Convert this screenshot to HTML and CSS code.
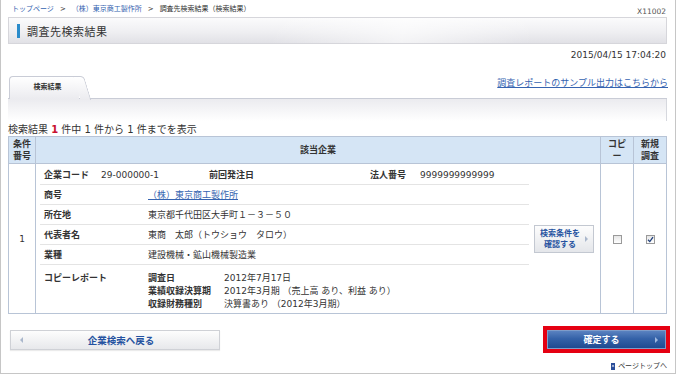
FILE: index.html
```html
<!DOCTYPE html>
<html lang="ja">

<head>
    <meta charset="UTF-8">
    <meta name="viewport" content="width=device-width, initial-scale=1.0">
    <title>調査先検索結果</title>

    <link rel="stylesheet" href="styles.css">
</head>

<body>

    <div class="page">

        <!-- HEADER -->
        <div class="topline">
            <p class="crumbs">
                <a href="#">トップページ</a><span class="crumbs__sep">&gt;</span><a href="#">（株）東京商工製作所</a><span class="crumbs__sep">&gt;</span>調査先検索結果（検索結果）
            </p>
            <span class="screen-id">X11002</span>
        </div>

        <h1 class="title-bar"><span class="title-bar__mark"></span>調査先検索結果</h1>

        <p class="stamp">2015/04/15 17:04:20</p>
        <!-- END HEADER -->

        <!-- TABS -->
        <div class="tabs">
            <div class="tabs__tab">検索結果</div>
            <a class="tabs__link" href="#">調査レポートのサンプル出力はこちらから</a>
        </div>
        <div class="tabs__body"></div>

        <p class="count">検索結果 <b class="count__num">1</b> 件中 1 件から 1 件までを表示</p>

        <!-- RESULT TABLE -->
        <table class="result">
            <colgroup>
                <col class="result__col-no">
                <col class="result__col-company">
                <col class="result__col-check">
                <col class="result__col-check">
            </colgroup>
            <thead>
                <tr>
                    <th>条件<br>番号</th>
                    <th>該当企業</th>
                    <th>コピ<br>ー</th>
                    <th>新規<br>調査</th>
                </tr>
            </thead>
            <tbody>
                <tr>
                    <td class="result__no">1</td>
                    <td class="result__company">
                        <div class="company">
                            <div class="company__info">
                                <div class="info-row">
                                    <span class="info-row__label info-row__label--code">企業コード</span>
                                    <span class="info-row__value info-row__value--code">29-000000-1</span>
                                    <span class="info-row__label info-row__label--order">前回発注日</span>
                                    <span class="info-row__label info-row__label--corp">法人番号</span>
                                    <span class="info-row__value">9999999999999</span>
                                </div>
                                <div class="info-row">
                                    <span class="info-row__label">商号</span>
                                    <a class="info-row__value" href="#">（株）東京商工製作所</a>
                                </div>
                                <div class="info-row">
                                    <span class="info-row__label">所在地</span>
                                    <span class="info-row__value">東京都千代田区大手町１－３－５０</span>
                                </div>
                                <div class="info-row">
                                    <span class="info-row__label">代表者名</span>
                                    <span class="info-row__value">東商　太郎（トウショウ　タロウ）</span>
                                </div>
                                <div class="info-row">
                                    <span class="info-row__label">業種</span>
                                    <span class="info-row__value">建設機械・鉱山機械製造業</span>
                                </div>
                                <div class="info-row info-row--report">
                                    <span class="info-row__label">コピーレポート</span>
                                    <dl class="report">
                                        <dt>調査日</dt>
                                        <dd>2012年7月17日</dd>
                                        <dt>業績収録決算期</dt>
                                        <dd>2012年3月期 （売上高 あり、利益 あり）</dd>
                                        <dt>収録財務種別</dt>
                                        <dd>決算書あり （2012年3月期）</dd>
                                    </dl>
                                </div>
                            </div>
                            <button class="cond-btn">
                                <span class="cond-btn__text">検索条件を<br>確認する</span>
                                <span class="arrow arrow--right"></span>
                            </button>
                        </div>
                    </td>
                    <td class="result__check"><span class="checkbox"></span></td>
                    <td class="result__check">
                        <span class="checkbox">
                            <svg width="7" height="7" viewBox="0 0 7 7">
                                <path d="M1 3.8 L2.8 5.6 L6 1.2" fill="none" stroke="#1f3f7c" stroke-width="1.3"/>
                            </svg>
                        </span>
                    </td>
                </tr>
            </tbody>
        </table>
        <!-- END RESULT TABLE -->

        <div class="actions">
            <button class="back-btn">
                <span class="arrow arrow--left"></span>
                <span class="back-btn__text">企業検索へ戻る</span>
            </button>
            <div class="confirm">
                <button class="confirm__btn">
                    <span class="confirm__text">確定する</span>
                    <span class="arrow arrow--right arrow--light"></span>
                </button>
            </div>
        </div>

        <div class="pagetop">
            <a class="pagetop__link" href="#">
                <svg class="pagetop__icon" width="4" height="7" viewBox="0 0 4 7">
                    <rect width="4" height="7" fill="#2a4d9a"/>
                    <path d="M2 1.8 L3.3 3.6 L0.7 3.6 Z" fill="#fff"/>
                </svg>
                ページトップへ
            </a>
        </div>

    </div>

</body>
</html>
```

FILE: styles.css
```css
* {
    box-sizing: border-box;
}

body {
    margin: 0;
    font-family: "DejaVu Sans", "Noto Sans CJK JP", sans-serif;
    font-size: 9px;
    color: #333;
    background-color: #fff;
}

a {
    color: #3563b0;
}

.page {
    width: 676px;
    height: 374px;
    border: 1px solid #c6c6c6;
    border-top: none;
    padding: 0 8px 0 7px;
}

/* Header */

.topline {
    display: flex;
    justify-content: space-between;
    align-items: flex-start;
    height: 17px;
    padding: 5px 1px 0 4px;
}

.crumbs {
    margin: 0;
    font-size: 7px;
    line-height: 9px;
}

.crumbs a {
    text-decoration: none;
}

.crumbs__sep {
    margin: 0 6px;
}

.screen-id {
    font-size: 7.5px;
    line-height: 9px;
    margin-top: 2px;
    color: #555;
}

.title-bar {
    margin: 0;
    height: 27px;
    display: flex;
    align-items: center;
    padding-left: 8px;
    border: 1px solid #d6d6db;
    background: linear-gradient(100deg, rgba(255, 255, 255, 0) 40%, rgba(255, 255, 255, .6) 60%, rgba(255, 255, 255, 0) 80%),
        linear-gradient(#fbfbfc 0%, #efeff2 55%, #e1e1e6 100%);
    font-size: 11px;
    font-weight: normal;
    letter-spacing: .5px;
    color: #333;
}

.title-bar__mark {
    width: 3px;
    height: 14px;
    margin-right: 7px;
    background-color: #2b8ccb;
}

.stamp {
    margin: 5px 1px 0 0;
    text-align: right;
    font-size: 9px;
    line-height: 12px;
}

/* Tabs */

.tabs {
    display: flex;
    justify-content: space-between;
    align-items: flex-start;
    margin-top: 15px;
    border-bottom: 1px solid #c9ccd6;
}

.tabs__tab {
    position: relative;
    width: 70px;
    height: 23px;
    margin: 0 0 -1px 1px;
    padding-left: 6px;
    border: 1px solid #c9ccd6;
    border-width: 1px 0 0 1px;
    border-radius: 4px 0 0 0;
    background: linear-gradient(#fff, #ebebef);
    font-size: 7px;
    font-weight: bold;
    line-height: 21px;
    text-align: center;
}

.tabs__tab::after {
    content: "";
    position: absolute;
    top: -1px;
    right: -5px;
    width: 10px;
    height: 23px;
    border-top: 1px solid #c9ccd6;
    border-right: 1px solid #c9ccd6;
    border-radius: 0 4px 0 0;
    background: linear-gradient(#fff, #ebebef);
    transform: skewX(17deg);
    transform-origin: top left;
}

.tabs__link {
    margin: 1px -1px 0 0;
    font-size: 9px;
    line-height: 12px;
}

.tabs__body {
    height: 22px;
    border-right: 1px solid #d6d8de;
    background: linear-gradient(#ebebef, #fff);
}

.count {
    margin: 3px 0 0;
    font-size: 10px;
    line-height: 12px;
}

.count__num {
    color: #c8102e;
}

/* Result table */

.result {
    width: 659px;
    margin-top: 0;
    border-collapse: collapse;
    table-layout: fixed;
}

.result__col-no {
    width: 27px;
}

.result__col-check {
    width: 33px;
}

.result th,
.result td {
    border: 1px solid #b8c4d6;
    padding: 0;
    text-align: center;
    vertical-align: middle;
}

.result th {
    height: 27px;
    background-color: #d5e5f5;
    font-weight: bold;
    line-height: 12px;
}

.result__no {
    font-size: 9px;
}

.result .result__company {
    padding: 0 6px 0 4px;
    text-align: left;
}

.company {
    display: flex;
    align-items: center;
    gap: 5px;
}

.company__info {
    width: 491px;
    padding-top: 1px;
}

.info-row {
    display: flex;
    align-items: center;
    height: 20px;
    border-bottom: 1px solid #e4e4e4;
}

.info-row__label {
    width: 108px;
    padding-left: 4px;
    font-weight: bold;
    flex-shrink: 0;
}

.info-row__label--code {
    width: 61px;
}

.info-row__value--code {
    width: 108px;
}

.info-row__label--order {
    width: 161px;
    padding-left: 0;
}

.info-row__label--corp {
    width: 50px;
    padding-left: 0;
}

.info-row--report {
    height: auto;
    align-items: flex-start;
    border-bottom: none;
    padding: 7px 0 2px;
    line-height: 13px;
}

.report {
    display: grid;
    grid-template-columns: 76px auto;
    margin: 0;
}

.report dt {
    font-weight: bold;
}

.report dd {
    margin: 0;
}

.cond-btn {
    display: flex;
    align-items: center;
    width: 60px;
    height: 28px;
    padding: 0 5px 0 0;
    border: 1px solid #c3c8d1;
    background: linear-gradient(#fdfdfd, #e4e6ea);
    font-family: inherit;
    cursor: pointer;
}

.cond-btn__text {
    flex: 1;
    font-size: 8px;
    font-weight: bold;
    line-height: 11px;
    color: #2552a0;
}

.arrow {
    width: 0;
    height: 0;
    border-top: 3px solid transparent;
    border-bottom: 3px solid transparent;
}

.arrow--right {
    border-left: 3px solid #aab7cc;
}

.arrow--left {
    border-right: 3px solid #aab7cc;
}

.arrow--light {
    border-left-color: #9fb8e0;
}

.checkbox {
    display: inline-flex;
    align-items: center;
    justify-content: center;
    width: 9px;
    height: 9px;
    border: 1px solid #9a9a9a;
    background: linear-gradient(#e6e6e6, #fff);
    vertical-align: middle;
}

/* Bottom buttons */

.actions {
    display: flex;
    justify-content: space-between;
    align-items: center;
    margin: 12px -3px 0 0;
}

.back-btn {
    display: flex;
    align-items: center;
    width: 210px;
    height: 20px;
    margin-left: 2px;
    padding: 0 0 0 9px;
    border: 1px solid #cfd1d6;
    background: linear-gradient(#fdfdfd, #e7e8eb);
    box-shadow: 0 1px 1px rgb(0 0 0 / 8%);
    font-family: inherit;
    cursor: pointer;
}

.back-btn__text {
    flex: 1;
    font-size: 9.5px;
    font-weight: bold;
    color: #2552a0;
}

.confirm {
    padding: 4px;
    background-color: #e50012;
}

.confirm__btn {
    display: flex;
    align-items: center;
    width: 119px;
    height: 19px;
    padding: 0 7px 0 0;
    border: 1px solid #7f9cc9;
    background: linear-gradient(#5a82c0 0%, #3562a8 45%, #1f4b91 100%);
    font-family: inherit;
    cursor: pointer;
}

.confirm__text {
    flex: 1;
    font-size: 9px;
    font-weight: bold;
    color: #fff;
}

.pagetop {
    display: flex;
    justify-content: flex-end;
    margin-top: 7px;
}

.pagetop__link {
    display: flex;
    align-items: center;
    gap: 3px;
    font-size: 7px;
    line-height: 12px;
    color: #333;
    text-decoration: none;
}
```
